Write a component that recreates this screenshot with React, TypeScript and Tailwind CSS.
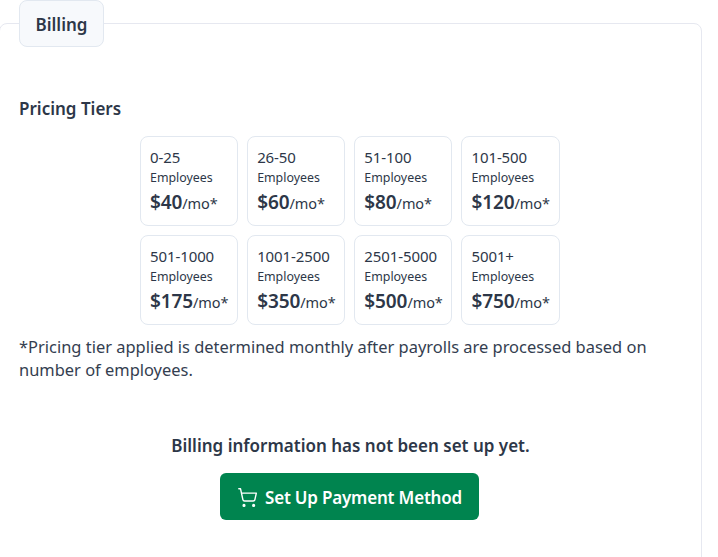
import { ShoppingCart } from "lucide-react";

const tiers = [
  ["0-25", "$40"],
  ["26-50", "$60"],
  ["51-100", "$80"],
  ["101-500", "$120"],
  ["501-1000", "$175"],
  ["1001-2500", "$350"],
  ["2501-5000", "$500"],
  ["5001+", "$750"],
];

export default function App() {
  return (
    <div className="w-[718px] h-[557px] overflow-hidden bg-white pt-[23px] text-[#2d3748] font-['Noto_Sans','Open_Sans',sans-serif]">
      <div className="w-[703px] h-[600px] -ml-px border border-[#e6e8f0] rounded-lg">
        <div className="-mt-[24px] ml-[19px] w-[85px] h-[47px] pt-[2px] flex items-center justify-center bg-[#f7f9fc] border border-[#e2e8f0] rounded-lg text-[17px] font-semibold">
          Billing
        </div>
        <h2 className="ml-[19px] mt-[50px] text-[17px] leading-[24px] font-semibold">Pricing Tiers</h2>
        <div className="mt-[15px] ml-[140px] w-[419.6px] grid grid-cols-4 gap-[9px]">
          {tiers.map(([range, price]) => (
            <div key={range} className="h-[90px] border border-[#e2e8f0] rounded-lg pl-[9px] pt-[10px]">
              <div className="text-[15px] leading-[20px] tracking-[-0.1px]">{range}</div>
              <div className="mt-[2px] text-[12.4px] leading-[18px]">Employees</div>
              <div className="text-[14.5px] leading-[31px] whitespace-nowrap tracking-[-0.1px]">
                <span className="text-[19px] font-semibold">{price}</span>/mo*
              </div>
            </div>
          ))}
        </div>
        <p className="ml-[19px] mt-[10px] w-[640px] text-[16.45px] leading-[23px] text-[#343e50]">
          *Pricing tier applied is determined monthly after payrolls are processed based on number of employees.
        </p>
        <div className="mt-[53px] pr-[2px] flex flex-col items-center">
          <div className="ml-[2px] text-[17px] leading-[24px] font-semibold">Billing information has not been set up yet.</div>
          <button className="mt-[15px] w-[259px] h-[47px] pt-[2px] flex items-center justify-center gap-[7px] bg-[#00844f] text-white rounded-md text-[17px] font-semibold tracking-[-0.2px]">
            <ShoppingCart size={21} strokeWidth={1.6} />
            Set Up Payment Method
          </button>
        </div>
      </div>
    </div>
  );
}
